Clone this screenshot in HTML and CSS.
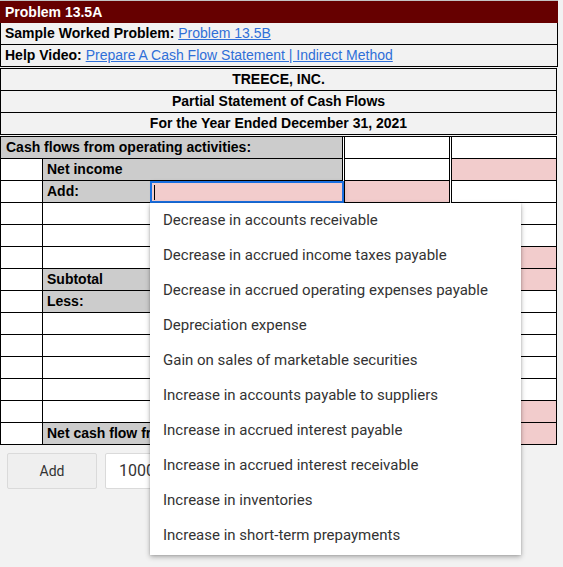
FILE: index.html
```html
<!DOCTYPE html>
<html lang="en">
<head>
<meta charset="utf-8">
<title>Problem 13.5A</title>
<link rel="stylesheet" href="styles.css">
</head>
<body>
<div class="page">
  <div class="problem">
    <div class="title">Problem 13.5A</div>
    <div class="info"><b>Sample Worked Problem:</b> <a href="#">Problem 13.5B</a></div>
    <div class="info"><b>Help Video:</b> <a href="#">Prepare A Cash Flow Statement | Indirect Method</a></div>
  </div>

  <div class="heading">
    <div class="hrow">TREECE, INC.</div>
    <div class="hrow">Partial Statement of Cash Flows</div>
    <div class="hrow">For the Year Ended December 31, 2021</div>
  </div>

  <div class="sheet">
    <div class="row">
      <div class="cell span gray lead">Cash flows from operating activities:</div>
      <div class="cell num"></div>
      <div class="cell num"></div>
    </div>
    <div class="row">
      <div class="cell first"></div>
      <div class="cell label gray">Net income</div>
      <div class="cell num"></div>
      <div class="cell num pink"></div>
    </div>
    <div class="row">
      <div class="cell first"></div>
      <div class="cell label gray with-input">
        <span>Add:</span>
        <div class="focus-input"><span class="caret"></span></div>
      </div>
      <div class="cell num pink"></div>
      <div class="cell num"></div>
    </div>
    <div class="row">
      <div class="cell first"></div>
      <div class="cell label"></div>
      <div class="cell num"></div>
      <div class="cell num"></div>
    </div>
    <div class="row">
      <div class="cell first"></div>
      <div class="cell label"></div>
      <div class="cell num"></div>
      <div class="cell num"></div>
    </div>
    <div class="row">
      <div class="cell first"></div>
      <div class="cell label"></div>
      <div class="cell num"></div>
      <div class="cell num pink"></div>
    </div>
    <div class="row">
      <div class="cell first"></div>
      <div class="cell label gray">Subtotal</div>
      <div class="cell num"></div>
      <div class="cell num pink"></div>
    </div>
    <div class="row">
      <div class="cell first"></div>
      <div class="cell label gray">Less:</div>
      <div class="cell num"></div>
      <div class="cell num"></div>
    </div>
    <div class="row">
      <div class="cell first"></div>
      <div class="cell label"></div>
      <div class="cell num"></div>
      <div class="cell num"></div>
    </div>
    <div class="row">
      <div class="cell first"></div>
      <div class="cell label"></div>
      <div class="cell num"></div>
      <div class="cell num"></div>
    </div>
    <div class="row">
      <div class="cell first"></div>
      <div class="cell label"></div>
      <div class="cell num"></div>
      <div class="cell num"></div>
    </div>
    <div class="row">
      <div class="cell first"></div>
      <div class="cell label"></div>
      <div class="cell num"></div>
      <div class="cell num"></div>
    </div>
    <div class="row">
      <div class="cell first"></div>
      <div class="cell label"></div>
      <div class="cell num"></div>
      <div class="cell num pink"></div>
    </div>
    <div class="row">
      <div class="cell first"></div>
      <div class="cell label gray">Net cash flow from operating activities</div>
      <div class="cell num"></div>
      <div class="cell num pink"></div>
    </div>
  </div>

  <div class="controls">
    <button class="btn" type="button">Add</button>
    <div class="amount">1000</div>
  </div>

  <ul class="menu">
    <li>Decrease in accounts receivable</li>
    <li>Decrease in accrued income taxes payable</li>
    <li>Decrease in accrued operating expenses payable</li>
    <li>Depreciation expense</li>
    <li>Gain on sales of marketable securities</li>
    <li>Increase in accounts payable to suppliers</li>
    <li>Increase in accrued interest payable</li>
    <li>Increase in accrued interest receivable</li>
    <li>Increase in inventories</li>
    <li>Increase in short-term prepayments</li>
  </ul>
</div>
</body>
</html>
```

FILE: styles.css
```css
html, body {
  margin: 0;
  padding: 0;
}

body {
  background: #f2f2f2;
  font-family: "Liberation Sans", Arial, sans-serif;
  font-size: 14px;
  color: #000;
  height: 567px;
  overflow: hidden;
}

.page {
  position: relative;
  width: 558px;
}

/* ---- problem header ---- */
.problem {
  border-top: 1px solid #c4c4c4;
}

.title {
  background: #660000;
  color: #fff;
  font-weight: bold;
  height: 22px;
  line-height: 22px;
  padding-left: 5px;
}

.info {
  height: 21px;
  line-height: 21px;
  padding-left: 4px;
  border: 1px solid #000;
  border-top: 0;
}

.info a {
  color: #2f6fd8;
  text-decoration: underline;
}

/* ---- statement heading ---- */
.heading {
  margin-top: 1px;
  width: 557px;
  box-sizing: border-box;
  border: 1px solid #000;
}

.hrow {
  height: 21px;
  line-height: 21px;
  text-align: center;
  font-weight: bold;
  border-bottom: 1px solid #000;
}

.hrow:last-child {
  border-bottom: 0;
}

/* ---- worksheet ---- */
.sheet {
  margin-top: 1px;
  width: 557px;
  background: #fff;
  border-top: 1px solid #000;
}

.row {
  display: grid;
  grid-template-columns: 43px 300px 107px 107px;
  height: 22px;
}

.cell {
  box-sizing: border-box;
  height: 22px;
  line-height: 21px;
  border-bottom: 1px solid #000;
  font-weight: bold;
  white-space: nowrap;
  overflow: visible;
  background: #fff;
}

.cell.first {
  border-left: 1px solid #000;
  border-right: 1px solid #000;
}

.cell.label {
  border-right: 1px solid #000;
  padding-left: 4px;
}

.cell.span {
  grid-column: 1 / 3;
  border-left: 1px solid #000;
  border-right: 1px solid #000;
}

.cell.lead {
  padding-left: 5px;
}

.cell.num {
  margin-left: 1px;
  border-left: 1px solid #000;
  border-right: 1px solid #000;
}

.gray {
  background: #cccccc;
}

.pink {
  background: #f2cccc;
}

.with-input {
  display: flex;
  align-items: flex-start;
  position: relative;
  z-index: 2;
}

.focus-input {
  margin-left: auto;
  margin-right: -2px;
  width: 194px;
  height: 22px;
  box-sizing: border-box;
  border: 2px solid #1a6fe0;
  background: #f2cccc;
  display: flex;
  align-items: center;
  padding-left: 2px;
  box-shadow: 2px 0 4px rgba(0, 0, 0, 0.08);
}

.caret {
  display: block;
  width: 1px;
  height: 15px;
  background: #000;
}

/* ---- add controls ---- */
.controls {
  display: flex;
  gap: 8px;
  margin-top: 8px;
  padding-left: 7px;
}

.btn {
  width: 90px;
  height: 36px;
  margin: 0;
  box-sizing: border-box;
  border: 1px solid #dadada;
  border-radius: 2px;
  background: #efefef;
  font-family: Roboto, "Liberation Sans", sans-serif;
  font-size: 14px;
  color: #333;
  padding: 0;
}

.amount {
  width: 170px;
  height: 36px;
  box-sizing: border-box;
  border: 1px solid #dadada;
  border-radius: 2px;
  background: #fff;
  font-family: Roboto, "Liberation Sans", sans-serif;
  font-size: 16px;
  color: #333;
  line-height: 34px;
  padding-left: 13px;
}

/* ---- dropdown menu ---- */
.menu {
  position: absolute;
  left: 150px;
  top: 203px;
  width: 371px;
  margin: 0;
  padding: 0 0 2px;
  list-style: none;
  background: #fff;
  box-shadow: 0 2px 5px rgba(0, 0, 0, 0.3), 0 0 2px rgba(0, 0, 0, 0.15);
  z-index: 10;
}

.menu li {
  height: 35px;
  line-height: 35px;
  padding-left: 13px;
  font-family: Roboto, "Liberation Sans", sans-serif;
  font-size: 15px;
  color: #333;
  white-space: nowrap;
}
```
